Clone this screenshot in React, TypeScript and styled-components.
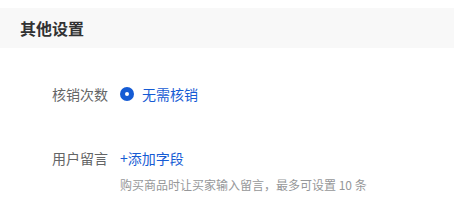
import styled, { createGlobalStyle } from 'styled-components';

const GlobalStyle = createGlobalStyle`
  body {
    margin: 0;
    background: #fff;
    font-family: "Noto Sans CJK SC", "Liberation Sans", sans-serif;
  }
`;

const Page = styled.div`
  padding-top: 8px;
`;

const Header = styled.div`
  height: 40px;
  background: #f8f8f8;
  display: flex;
  align-items: center;
  padding-left: 20px;
`;

const Title = styled.h2`
  margin: 0;
  font-size: 16px;
  font-weight: 600;
  color: #323233;
  line-height: 22px;
`;

const Form = styled.div`
  display: flex;
  flex-direction: column;
  gap: 44px;
  padding-top: 36px;
`;

const Row = styled.div`
  display: flex;
  align-items: flex-start;
`;

const Label = styled.div`
  width: 120px;
  flex-shrink: 0;
  padding-right: 12px;
  box-sizing: border-box;
  text-align: right;
  font-size: 14px;
  line-height: 20px;
  color: #646566;
`;

const Control = styled.div`
  display: flex;
  flex-direction: column;
`;

const Radio = styled.label`
  display: flex;
  align-items: center;
  gap: 8px;
  font-size: 14px;
  line-height: 20px;
  color: #155bd4;
`;

const Dot = styled.span`
  width: 14px;
  height: 14px;
  border-radius: 50%;
  background: #155bd4;
  display: flex;
  align-items: center;
  justify-content: center;
  &::after {
    content: '';
    width: 4px;
    height: 4px;
    border-radius: 50%;
    background: #fff;
  }
`;

const Link = styled.a`
  font-size: 14px;
  line-height: 20px;
  color: #155bd4;
  cursor: pointer;
`;

const Help = styled.div`
  margin-top: 8px;
  font-size: 12px;
  line-height: 18px;
  color: #969799;
`;

export default function App() {
  return (
    <Page>
      <GlobalStyle />
      <Header>
        <Title>其他设置</Title>
      </Header>
      <Form>
        <Row>
          <Label>核销次数</Label>
          <Control>
            <Radio>
              <Dot />
              无需核销
            </Radio>
          </Control>
        </Row>
        <Row>
          <Label>用户留言</Label>
          <Control>
            <Link>+添加字段</Link>
            <Help>购买商品时让买家输入留言，最多可设置 10 条</Help>
          </Control>
        </Row>
      </Form>
    </Page>
  );
}
